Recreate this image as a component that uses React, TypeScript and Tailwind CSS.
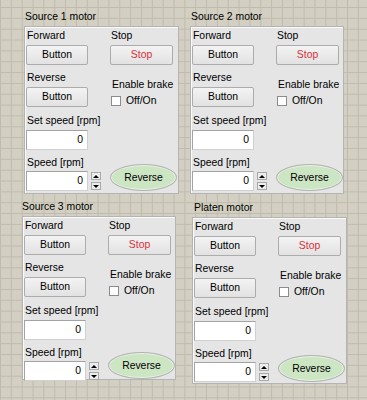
const font = "font-['Liberation_Sans',Arial,sans-serif] text-[10.4px] leading-[12px] text-black";

const Btn = ({ label, red }: { label: string; red?: boolean }) => (
  <div
    className={`flex h-[20px] items-center justify-center rounded-[2px] border border-[#acacac] bg-[linear-gradient(#f3f3f3,#e2e2e2)] ${
      red ? "w-[63px] text-[#d9303a]" : "w-[62px]"
    }`}
  >
    {label}
  </div>
);

const NumBox = () => (
  <div className="flex h-[20px] w-[62px] items-center justify-end border border-[#a3a3a3] border-b-[#d0d0d0] border-r-[#d0d0d0] bg-white pr-[4px]">
    0
  </div>
);

const Spin = () => (
  <div className="ml-[3px] flex flex-col gap-[2px] pt-[1px]">
    <div className="flex h-[8px] w-[10px] items-center justify-center border border-[#a8a8a8] bg-[#ededed]">
      <div className="h-0 w-0 border-x-[3px] border-b-[3px] border-x-transparent border-b-black" />
    </div>
    <div className="flex h-[8px] w-[10px] items-center justify-center border border-[#a8a8a8] bg-[#ededed]">
      <div className="h-0 w-0 border-x-[3px] border-t-[3px] border-x-transparent border-t-black" />
    </div>
  </div>
);

type PanelProps = {
  title: string;
  w: string;
  h: string;
  titleX: string;
  bottom: string;
};

const Panel = ({ title, w, h, titleX, bottom }: PanelProps) => (
  <div className="flex flex-col">
    <div className={`mb-[3px] h-[12px] ${titleX}`}>{title}</div>
    <div className={`flex border border-[#b4b4b4] bg-[#e5e5e5] pl-[1px] shadow-[inset_1px_1px_0_#fafafa] ${w} ${h}`}>
      {/* left column */}
      <div className="flex w-[84px] flex-col">
        <div className="ml-[1px] mt-[3px] h-[12px]">Forward</div>
        <div className="mt-[3px]">
          <Btn label="Button" />
        </div>
        <div className="ml-[1px] mt-[7px] h-[12px]">Reverse</div>
        <div className="mt-[3px]">
          <Btn label="Button" />
        </div>
        <div className="ml-[1px] mt-[8px] h-[12px] whitespace-nowrap">Set speed [rpm]</div>
        <div className="mt-[3px]">
          <NumBox />
        </div>
        <div className="ml-[1px] mt-[7px] h-[12px]">Speed [rpm]</div>
        <div className="mt-[2px] flex">
          <NumBox />
          <Spin />
        </div>
      </div>
      {/* right column */}
      <div className="flex flex-1 flex-col">
        <div className="ml-[1px] mt-[3px] h-[12px]">Stop</div>
        <div className="mt-[3px]">
          <Btn label="Stop" red />
        </div>
        <div className="ml-[2px] mt-[14px] h-[12px] whitespace-nowrap">Enable brake</div>
        <div className="ml-[1px] mt-[4px] flex h-[12px] items-center gap-[5px]">
          <div className="h-[10px] w-[10px] border border-[#8c8c8c] bg-white" />
          <span>Off/On</span>
        </div>
        <div
          className={`mt-auto flex h-[27px] w-[67px] items-center justify-center rounded-[50%] border border-[#b3b3b3] bg-[#cce6c4] shadow-[inset_0_0_0_1px_#e8f3e4] ${bottom}`}
        >
          Reverse
        </div>
      </div>
    </div>
  </div>
);

export default function App() {
  return (
    <div
      className={`h-[400px] w-[367px] overflow-hidden bg-[#d3d0c3] bg-[linear-gradient(to_right,#bfbcae_1px,transparent_1px),linear-gradient(to_bottom,#bfbcae_1px,transparent_1px)] bg-[size:10.85px_10.85px] bg-[position:0px_7px] ${font}`}
    >
      <div className="flex pt-[11px]">
        <div className="ml-[24px]">
          <Panel title="Source 1 motor" w="w-[155px]" h="h-[168px]" titleX="ml-[1px]" bottom="mb-[2px]" />
        </div>
        <div className="ml-[11px]">
          <Panel title="Source 2 motor" w="w-[154px]" h="h-[168px]" titleX="ml-[1px]" bottom="mb-[2px]" />
        </div>
      </div>
      <div className="mt-[7px] flex items-start">
        <div className="ml-[22px]">
          <Panel title="Source 3 motor" w="w-[154px]" h="h-[164px]" titleX="ml-0" bottom="mb-0" />
        </div>
        <div className="ml-[16px] mt-[1px]">
          <Panel title="Platen motor" w="w-[155px]" h="h-[167px]" titleX="ml-[2px]" bottom="mb-[1px]" />
        </div>
      </div>
    </div>
  );
}
